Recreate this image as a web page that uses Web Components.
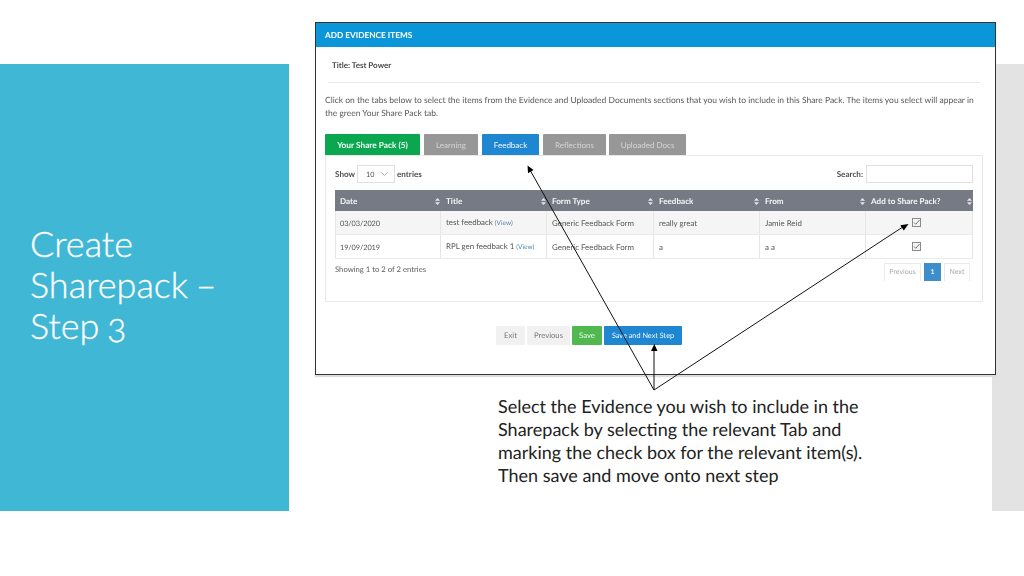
<!DOCTYPE html>
<html lang="en">
<head>
<meta charset="utf-8">
<title>Create Sharepack - Step 3</title>
<style>
  html, body { margin: 0; padding: 0; background: #fff; }
</style>
</head>
<body>
<sp-slide>
  <span slot="title">Create<br>Sharepack –<br>Step 3</span>
  <sp-window></sp-window>
  <span slot="note">Select the Evidence you wish to include in the<br>Sharepack by selecting the relevant Tab and<br>marking the check box for the relevant item(s).<br>Then save and move onto next step</span>
</sp-slide>

<script>
class SpSlide extends HTMLElement {
  constructor() {
    super();
    this.attachShadow({ mode: "open" }).innerHTML = `
      <style>
        :host { display: block; position: relative; width: 1024px; height: 576px; overflow: hidden; background: #fff; }
        .band { display: flex; height: 447px; margin-top: 64px; position: absolute; top: 0; left: 0; right: 0; }
        .side { width: 289px; box-sizing: border-box; background: #40b7d5; color: #fff; padding: 159px 0 0 30px;
                font: 300 36px/41px Lato, sans-serif; word-spacing: -2px; font-variant-numeric: oldstyle-nums; -webkit-text-stroke: .3px #fff; }
        .mid { flex: 1; min-width: 0; }
        .strip { width: 32px; background: #e3e3e3; }
        .win { margin: -42px 0 0 26px; position: relative; width: 681px; }
        .note { margin: 20px 0 0 209px; width: 400px; font: 400 18px/23px Lato, sans-serif; color: #222; text-rendering: geometricPrecision; }
        svg { position: absolute; left: 0; top: 0; width: 1024px; height: 576px; pointer-events: none; }
      </style>
      <div class="band">
        <div class="side"><slot name="title"></slot></div>
        <div class="mid">
          <div class="win"><slot></slot></div>
          <div class="note"><slot name="note"></slot></div>
        </div>
        <div class="strip"></div>
      </div>
      <svg viewBox="0 0 1024 576" fill="#000">
        <g stroke="#111" stroke-width="1" fill="none">
          <path d="M654 390 530 170"/>
          <path d="M654 390V350"/>
          <path d="M654 390 902 227.500"/>
        </g>
        <path d="M527.500 165.500 533.500 170 528 173.200z"/>
        <path d="M654.300 344 657.500 351H651z"/>
        <path d="M908.500 224 903.800 230.500 900.300 225.200z"/>
      </svg>`;
  }
}

class SpTab extends HTMLElement {
  constructor() {
    super();
    this.attachShadow({ mode: "open" }).innerHTML = `
      <style>
        :host { display: flex; align-items: center; justify-content: center; box-sizing: border-box; height: 21px; padding-top: 1px;
                background: var(--bg, #979797); color: var(--fg, #d5d5d5); border-radius: 1px 1px 0 0; }
      </style>
      <slot></slot>`;
  }
}

class SpBtn extends HTMLElement {
  constructor() {
    super();
    this.attachShadow({ mode: "open" }).innerHTML = `
      <style>
        :host { display: flex; align-items: center; justify-content: center; box-sizing: border-box; height: 19px;
                background: var(--bg, #f1f1f1); color: var(--fg, #777); border-radius: 1px; font-size: 7.700px; }
      </style>
      <slot></slot>`;
  }
}

const sortIcon = `<svg width="5" height="7" viewBox="0 0 5 7"><path fill="#e4e6e9" d="M2.500 0 5 2.800H0zM2.500 7 0 4.200H5z"/></svg>`;
const checkIcon = `<svg width="9" height="9" viewBox="0 0 9 9" fill="none"><rect x=".5" y=".5" width="8" height="8" fill="#f4f4f4" stroke="#8a8a8a"/><path d="M2 4.500 3.800 6.300 7.500 2" stroke="#777"/></svg>`;

class SpTable extends HTMLElement {
  constructor() {
    super();
    const heads = ["Date", "Title", "Form Type", "Feedback", "From", "Add to Share Pack?"];
    const rows = [
      ['<b>03/03/2020</b>', 'test feedback <i>(View)</i>', "Generic Feedback Form", "really great", "Jamie Reid"],
      ['<b>19/09/2019</b>', 'RPL gen feedback 1 <i>(View)</i>', "Generic Feedback Form", "a", "a a"]
    ];
    this.attachShadow({ mode: "open" }).innerHTML = `
      <style>
        :host { display: block; font-size: 7.900px; color: #555; }
        .row { display: grid; grid-template-columns: 106px 106px 107px 106px 106px 107px; }
        .head { background: #757a85; color: #f6f7f8; font-weight: 700; height: 21px; font-size: 8.100px; }
        .head div { display: flex; align-items: center; justify-content: space-between; padding: 1px 1px 0 5px; }
        .body { height: 24px; border-bottom: 1px solid #e8ebed; box-sizing: border-box; }
        .body.odd { background: #f5f5f5; }
        .body div { display: flex; align-items: center; padding: 1px 0 0 5px; border-right: 1px solid #e6e6e6; white-space: nowrap; }
        .body div:first-child { border-left: 1px solid #e6e6e6; padding-left: 4px; }
        .body div.chk { justify-content: center; padding: 0 6px 0 0; }
        b { font-weight: 400; font-size: 7.400px; letter-spacing: -.1px; }
        i { font-style: normal; color: #4c87a6; font-size: 6.500px; }
      </style>
      <div class="row head">${heads.map(h => `<div><span>${h}</span>${sortIcon}</div>`).join("")}</div>
      ${rows.map((r, n) => `<div class="row body ${n ? "" : "odd"}">${r.map(c => `<div><span>${c}</span></div>`).join("")}<div class="chk">${checkIcon}</div></div>`).join("")}`;
  }
}

class SpWindow extends HTMLElement {
  constructor() {
    super();
    this.attachShadow({ mode: "open" }).innerHTML = `
      <style>
        :host { display: block; box-sizing: border-box; width: 681px; height: 353px; background: #fff; border: 1px solid #333;
                font: 400 8px/13px Lato, sans-serif; color: #666; box-shadow: 0 2px 1px #ddd; white-space: nowrap; text-rendering: geometricPrecision; }
        .shot { height: 100%; overflow: hidden; filter: blur(.3px); }
        header { box-sizing: border-box; height: 24px; padding: 1px 0 0 9px; background: #0a96d9; color: #fff; font-weight: 700; font-size: 8.250px; display: flex; align-items: center; }
        .title { box-sizing: border-box; height: 36px; margin: 0 15px 0 12px; padding: 1px 0 0 4px; border-bottom: 1px solid #e8e8e8; display: flex; align-items: center;
                 font-weight: 700; color: #4a4a4a; font-size: 8px; }
        .intro { margin: 11px 0 0 9px; font-size: 8.490px; color: #585858; height: 40px; }
        .tabs { display: flex; gap: 4px; margin-left: 9px; font-size: 8px; }
        .panel { margin-left: 9px; width: 658px; height: 147px; box-sizing: border-box; border: 1px solid #e8e8e8; padding: 9px 9px 0; }
        .controls { display: flex; align-items: center; height: 18px; margin-bottom: 7px; font-weight: 700; font-size: 8.100px; color: #505050; }
        .sel { box-sizing: border-box; width: 38px; height: 18px; margin: 0 2px 0 2px; padding: 0 6px 0 8px; border: 1px solid #e0e0e0; display: flex; align-items: center;
               justify-content: space-between; font-weight: 400; font-size: 7.200px; }
        .search { margin-left: auto; }
        .inp { box-sizing: border-box; width: 107px; height: 18px; margin-left: 3px; border: 1px solid #e0e0e0; }
        .foot { display: flex; justify-content: space-between; padding: 4px 3px 0 0; }
        .foot > span { color: #5c5c5c; font-size: 7.700px; }
        .pager { display: flex; gap: 3px; font-size: 7px; color: #aaa; height: 18px; }
        .pager span { display: flex; align-items: center; justify-content: center; box-sizing: border-box; border: 1px solid #eaeaea; border-bottom: 0; }
        .pager .on { background: #3d8ecb; color: #e4f0fa; border: 0; font-weight: 700; }
        .actions { display: flex; gap: 2px; margin: 24px 0 0 180px; }
      </style>
      <div class="shot">
        <header>ADD EVIDENCE ITEMS</header>
        <div class="title">Title: Test Power</div>
        <div class="intro">Click on the tabs below to select the items from the Evidence and Uploaded Documents sections that you wish to include in this Share Pack. The items you select will appear in<br>the green Your Share Pack tab.</div>
        <div class="tabs">
          <sp-tab style="width:95px;--bg:#0ba750;--fg:#f2fff7;font-weight:700;font-size:8.300px">Your Share Pack (5)</sp-tab>
          <sp-tab style="width:54px">Learning</sp-tab>
          <sp-tab style="width:57px;--bg:#1f87d2;--fg:#eef7fd">Feedback</sp-tab>
          <sp-tab style="width:63px;margin-right:-1px">Reflections</sp-tab>
          <sp-tab style="width:77px">Uploaded Docs</sp-tab>
        </div>
        <div class="panel">
          <div class="controls">
            <span>Show</span>
            <span class="sel"><span>10</span><svg width="7" height="4" viewBox="0 0 7 4" fill="none"><path d="M.5.5 3.500 3.300 6.500.5" stroke="#999" stroke-width=".8"/></svg></span>
            <span>entries</span>
            <span class="search">Search:</span>
            <span class="inp"></span>
          </div>
          <sp-table></sp-table>
          <div class="foot">
            <span>Showing 1 to 2 of 2 entries</span>
            <div class="pager">
              <span style="width:37px">Previous</span>
              <span class="on" style="width:17px">1</span>
              <span style="width:26px">Next</span>
            </div>
          </div>
        </div>
        <div class="actions">
          <sp-btn style="width:29px">Exit</sp-btn>
          <sp-btn style="width:43px">Previous</sp-btn>
          <sp-btn style="width:30px;--bg:#4fb84f;--fg:#f0faf0">Save</sp-btn>
          <sp-btn style="width:78px;--bg:#1f87d2;--fg:#eef7fd;font-size:7.300px">Save and Next Step</sp-btn>
        </div>
      </div>`;
  }
}

customElements.define("sp-slide", SpSlide);
customElements.define("sp-tab", SpTab);
customElements.define("sp-btn", SpBtn);
customElements.define("sp-table", SpTable);
customElements.define("sp-window", SpWindow);
</script>
</body>
</html>
